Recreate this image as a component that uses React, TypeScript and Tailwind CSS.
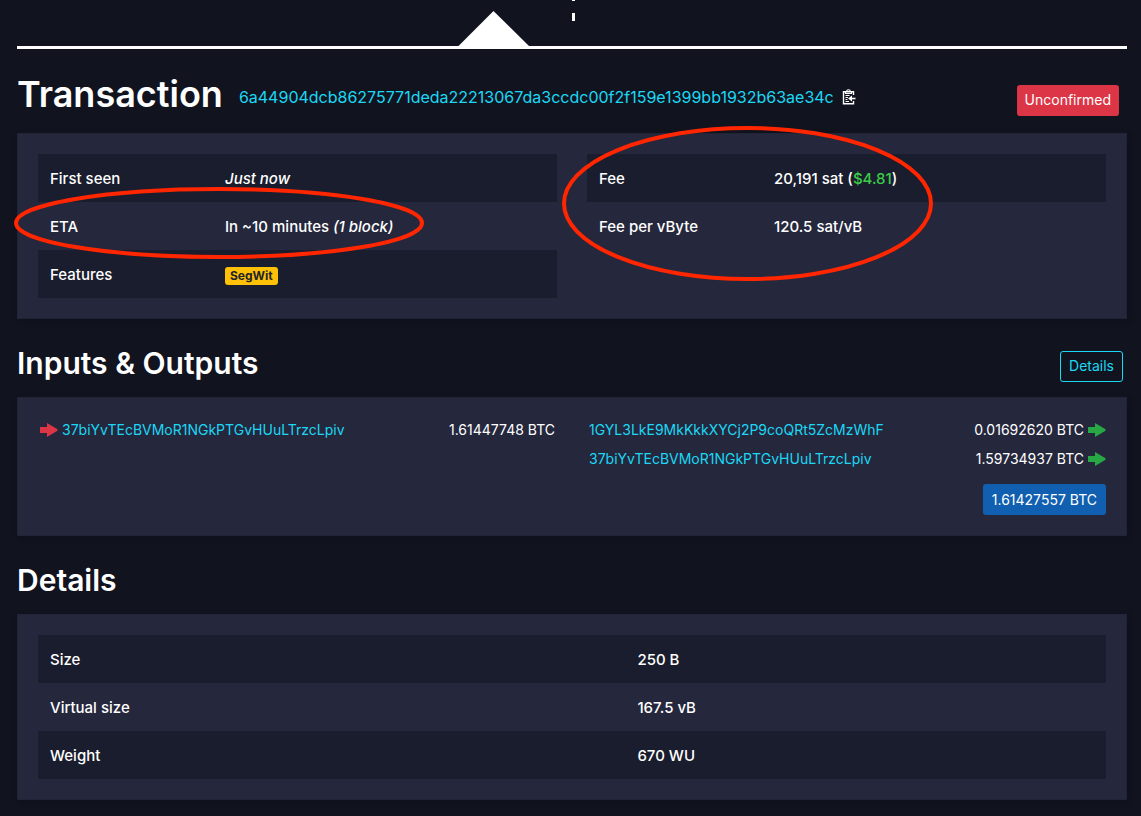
import type { ReactNode } from 'react';

interface RowProps {
  label: string;
  children: ReactNode;
}

interface TransferProps {
  address: string;
  amount: string;
  direction: 'in' | 'out';
}

const InfoRow = ({ label, children }: RowProps) => (
  <tr className="h-12 odd:bg-[#1a1d2d]">
    <th scope="row" className="w-[175px] px-3 pt-[2px] text-left font-medium">{label}</th>
    <td className="px-3 pt-[2px]">{children}</td>
  </tr>
);

const DetailRow = ({ label, children }: RowProps) => (
  <tr className="h-12 odd:bg-[#1a1d2d]">
    <th scope="row" className="w-[55%] px-3 pt-[2px] text-left font-medium">{label}</th>
    <td className="px-3 pt-[2px]">{children}</td>
  </tr>
);

const Arrow = ({ className }: { className: string }) => (
  <svg viewBox="0 0 18 14" className={`h-[14px] w-[18px] shrink-0 ${className}`} fill="currentColor" aria-hidden="true">
    <path d="M0 4h7V0l10.500 6.200v1.600L7 14v-4H0z" />
  </svg>
);

const Transfer = ({ address, amount, direction }: TransferProps) => (
  <li className="flex h-6 items-center text-sm">
    {direction === 'in' && <Arrow className="mr-1 text-[#dc3545]" />}
    <a href="#address" className="text-[#1bd8f4]">{address}</a>
    <span className="ml-auto">{amount}</span>
    {direction === 'out' && <Arrow className="ml-1 text-[#28a745]" />}
  </li>
);

const ClipboardIcon = () => (
  <svg viewBox="0 0 14 16" className="h-4 w-[14px]" fill="none" stroke="currentColor" aria-hidden="true">
    <path d="M11.500 6V2.700h-10v12h10V12" strokeWidth="1.400" />
    <path d="M3.500 4.500V2.500h1.200C4.700 1.300 5.400.7 6.500.7s1.800.6 1.800 1.800h1.200v2z" strokeWidth="1.100" />
    <path d="M3.500 6.500h4M3.500 8.500h2.500M3.500 10.500h2M3.500 12.500h3.500" />
    <path d="M13.500 9.500H8" strokeWidth="1.600" />
    <path d="M10 6.500v6l-4-3z" fill="currentColor" stroke="none" />
  </svg>
);

const panel = 'border border-[#212337] bg-[#25273d] p-5 shadow-[2px_2px_6px_rgba(0,0,0,0.2)]';

const App = () => {
  return (
    <div className="min-h-screen bg-[#11131f] pb-4 pl-[17px] pr-[14px] font-['Inter',sans-serif] text-[15px] leading-6 text-white">
      <div className="h-[49px] overflow-hidden border-b-[3px] border-white">
        <svg className="h-[46px] w-full" aria-hidden="true">
          <path d="M441 46.500 476.500 11 512.500 46.500z" fill="#fff" />
          <path d="M555 0h3v1h-3zM555 13h3v8h-3z" fill="#fff" />
        </svg>
      </div>

      <header className="flex h-[84px] items-center pr-2 pt-[6px]">
        <h1 className="text-4xl font-semibold">Transaction</h1>
        <a href="#tx" className="ml-4 mt-[6px] text-base text-[#1bd8f4]">
          6a44904dcb86275771deda22213067da3ccdc00f2f159e1399bb1932b63ae34c
        </a>
        <button type="button" aria-label="Copy transaction id" className="ml-2 mt-[6px]">
          <ClipboardIcon />
        </button>
        <button type="button" className="ml-auto mt-3 h-[31px] rounded-[3px] bg-[#dc3545] px-2 text-sm">
          Unconfirmed
        </button>
      </header>

      <section className={`grid grid-cols-2 items-start gap-[30px] font-medium ${panel}`}>
        <div className="relative">
          <table className="w-full">
            <tbody>
              <InfoRow label="First seen"><i>Just now</i></InfoRow>
              <InfoRow label="ETA">In ~10 minutes <i>(1 block)</i></InfoRow>
              <InfoRow label="Features">
                <span className="mt-[2px] block w-fit rounded-[3px] bg-[#ffc107] px-[5px] text-xs leading-[18px] font-bold text-[#212529]">
                  SegWit
                </span>
              </InfoRow>
            </tbody>
          </table>
          <svg className="pointer-events-none absolute -left-6 top-[33px] h-[72px] w-[410px]" aria-hidden="true">
            <ellipse cx="205" cy="36" rx="203" ry="34" fill="none" stroke="#ff2600" strokeWidth="4" />
          </svg>
        </div>
        <div className="relative">
          <table className="w-full">
            <tbody>
              <InfoRow label="Fee">
                20,191 sat (<span className="text-[#3bcc49]">$4.81</span>)
              </InfoRow>
              <InfoRow label="Fee per vByte">120.5 sat/vB</InfoRow>
            </tbody>
          </table>
          <svg className="pointer-events-none absolute -left-[25px] -top-7 h-[155px] w-[371px]" aria-hidden="true">
            <ellipse cx="185.500" cy="77.500" rx="183.500" ry="75.500" fill="none" stroke="#ff2600" strokeWidth="4" />
          </svg>
        </div>
      </section>

      <div className="flex h-[78px] items-center pr-1 pt-[10px]">
        <h2 className="text-3xl font-semibold">Inputs &amp; Outputs</h2>
        <button type="button" className="ml-auto mt-[6px] h-[31px] rounded-[3px] border border-[#1bd8f4] px-2 text-sm text-[#1bd8f4]">
          Details
        </button>
      </div>

      <section className={`grid grid-cols-2 gap-[30px] ${panel}`}>
        <ul className="px-[2px]">
          <Transfer direction="in" address="37biYvTEcBVMoR1NGkPTGvHUuLTrzcLpiv" amount="1.61447748 BTC" />
        </ul>
        <div>
          <ul className="flex flex-col gap-[5px] pl-[2px]">
            <Transfer direction="out" address="1GYL3LkE9MkKkkXYCj2P9coQRt5ZcMzWhF" amount="0.01692620 BTC" />
            <Transfer direction="out" address="37biYvTEcBVMoR1NGkPTGvHUuLTrzcLpiv" amount="1.59734937 BTC" />
          </ul>
          <button type="button" className="ml-auto mt-[13px] block h-[31px] rounded-[3px] bg-[#105fb0] px-[9px] text-sm">
            1.61427557 BTC
          </button>
        </div>
      </section>

      <div className="flex h-[78px] items-center pt-[10px]">
        <h2 className="text-3xl font-semibold">Details</h2>
      </div>

      <section className={`font-medium ${panel}`}>
        <table className="w-full">
          <tbody>
            <DetailRow label="Size">250 B</DetailRow>
            <DetailRow label="Virtual size">167.5 vB</DetailRow>
            <DetailRow label="Weight">670 WU</DetailRow>
          </tbody>
        </table>
      </section>
    </div>
  );
};

export default App;
